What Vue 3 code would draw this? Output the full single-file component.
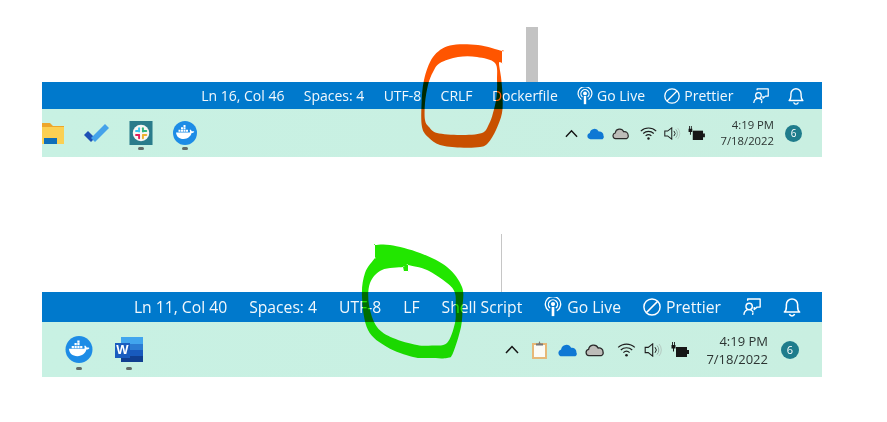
<template>
  <div class="page">
    <svg width="0" height="0" class="defs">
      <symbol id="i-folder" viewBox="0 0 22 21">
        <path d="M0 0h8l3 3h11v5H0z" fill="#eda62b" />
        <path d="M0 4h22v17H0z" fill="#fbd053" />
        <path d="M2 15h13v6H2z" fill="#0f6fb9" />
      </symbol>
      <symbol id="i-todo" viewBox="0 0 25 20">
        <path d="M2 10l7 7" stroke="#1d50b5" stroke-width="5.600" fill="none" />
        <path d="M9 17L23 3" stroke="#45a2ea" stroke-width="5.600" fill="none" />
      </symbol>
      <symbol id="i-slack" viewBox="0 0 24 25">
        <path d="M0 0h24v25H0z" fill="#2a7c8b" />
        <circle cx="12" cy="12.500" r="8.600" fill="#f7f7f4" />
        <g stroke-width="2" stroke-linecap="round">
          <path d="M10 7.500v3.500" stroke="#36c5f0" />
          <path d="M6.800 10.500h3" stroke="#36c5f0" />
          <path d="M14 7.500v3.500" stroke="#2eb67d" />
          <path d="M14.500 10.500h3" stroke="#2eb67d" />
          <path d="M14 14.500v3.500" stroke="#ecb22e" />
          <path d="M14.500 14.500h3" stroke="#ecb22e" />
          <path d="M10 14.500v3.500" stroke="#e01e5a" />
          <path d="M6.800 14.500h3" stroke="#e01e5a" />
        </g>
      </symbol>
      <symbol id="i-docker" viewBox="0 0 24 24">
        <circle cx="12" cy="12" r="12" fill="#1d8ce6" />
        <path d="M3 11.400h13.800c.4-1 .2-1.800-.2-2.500l.8-.5c.8.600 1.300 1.200 1.400 1.900.9-.2 1.800-.1 2.500.3-.5 1-1.500 1.500-2.700 1.500-1 3.500-3.800 5.800-8 5.800-4.600 0-7-2.200-7.600-6.500z" fill="#fff" />
        <path d="M5.500 8.800h2v2h-2zM8 8.800h2v2H8zM10.500 8.800h2v2h-2zM8 6.300h2v2H8zM10.500 6.300h2v2h-2zM10.500 3.900h2v2h-2zM13 8.800h2v2h-2z" fill="#fff" />
      </symbol>
      <symbol id="i-word" viewBox="0 0 28 25">
        <path d="M6 0h22v7H6z" fill="#41a5ee" />
        <path d="M6 7h22v6H6z" fill="#2b7cd3" />
        <path d="M6 13h22v6H6z" fill="#185abd" />
        <path d="M6 19h22v6H6z" fill="#103f91" />
        <path d="M0 6h15v15H0z" fill="#1a5cbf" />
      </symbol>
      <symbol id="i-live" viewBox="0 0 16 18">
        <g fill="none" stroke="#fff" stroke-width="1.200" stroke-linecap="round">
          <path d="M4.100 12.200A6.900 6.900 0 1 1 11.900 12.200" />
          <path d="M5.100 9.600A4.100 4.100 0 1 1 10.900 9.600" />
        </g>
        <circle cx="8" cy="6.400" r="1.900" fill="#fff" />
        <path d="M6.800 9h2.400v8.200H6.800z" fill="#fff" />
      </symbol>
      <symbol id="i-prettier" viewBox="0 0 16 16">
        <g fill="none" stroke="#fff" stroke-width="1.300">
          <circle cx="8" cy="8" r="7.200" />
          <path d="M3 13L13 3" />
        </g>
      </symbol>
      <symbol id="i-feedback" viewBox="0 0 17 17">
        <g fill="none" stroke="#fff" stroke-width="1.300" stroke-linejoin="round">
          <path d="M4.400 2.500V1h11.800v7.600h-3l-2.600 2.200V8.600" />
          <circle cx="5.800" cy="8" r="3" />
          <path d="M.8 16c.3-3 2.400-5 5-5 1.500 0 3 .8 3.800 2.200" />
          <path d="M9 16l.5-2.500" />
        </g>
      </symbol>
      <symbol id="i-bell" viewBox="0 0 15 17">
        <g fill="none" stroke="#fff" stroke-width="1.300" stroke-linejoin="round">
          <path d="M1 12.800c1.400-1 1.700-2.400 1.700-4.600V6.500a4.800 4.800 0 0 1 9.600 0v1.700c0 2.200.3 3.600 1.700 4.600z" />
          <path d="M5.300 14.500a2.300 2.300 0 0 0 4.400 0" />
        </g>
      </symbol>
      <symbol id="i-caret" viewBox="0 0 14 9">
        <path d="M1 8l6-6.500L13 8" fill="none" stroke="#141414" stroke-width="1.500" />
      </symbol>
      <symbol id="i-clip" viewBox="0 0 15 18">
        <path d="M1 3h13v14H1z" fill="#fbfbf6" stroke="#e6b877" stroke-width="2" />
        <path d="M4 4.500V2.500h2.500l1-2.500 1 2.500H11v2z" fill="#777" />
      </symbol>
      <symbol id="i-onedrive" viewBox="0 0 19 13">
        <path d="M3.800 12.800a3.500 3.500 0 0 1-.7-6.900 5.300 5.300 0 0 1 10-1.600 4.400 4.400 0 0 1 5.300 4.600 3 3 0 0 1-1 3.900z" fill="#0f78d4" />
      </symbol>
      <symbol id="i-cloud" viewBox="0 0 19 13">
        <path d="M4 12.200a3.200 3.200 0 0 1-.4-6.300 5 5 0 0 1 9.500-1.400 3.900 3.900 0 0 1 4.900 4 2.900 2.900 0 0 1-1.800 3.700z" fill="#bdbdb9" stroke="#2a2a2a" stroke-width="1.300" />
      </symbol>
      <symbol id="i-wifi" viewBox="0 0 18 14">
        <g fill="none" stroke="#1e1e1e" stroke-width="1.200">
          <path d="M.7 4.400a12 12 0 0 1 16.600 0" />
          <path d="M3.300 7a8.300 8.300 0 0 1 11.400 0" />
          <path d="M5.900 9.600a4.600 4.600 0 0 1 6.200 0" />
        </g>
        <circle cx="9" cy="12.300" r="1.300" fill="#1e1e1e" />
      </symbol>
      <symbol id="i-speaker" viewBox="0 0 18 14">
        <path d="M.7 4.400h3L8.200.9v12.200L3.700 9.600h-3z" fill="none" stroke="#1e1e1e" stroke-width="1.100" />
        <path d="M10.500 4.200a4 4 0 0 1 0 5.600" fill="none" stroke="#1e1e1e" stroke-width="1" />
        <path d="M12.500 2.500a6.600 6.600 0 0 1 0 9" fill="none" stroke="#8fa59d" stroke-width="1" />
        <path d="M14.500 1a9 9 0 0 1 0 12" fill="none" stroke="#b5c9c1" stroke-width="1" />
      </symbol>
      <symbol id="i-power" viewBox="0 0 18 15">
        <path d="M5 5h11v10H5z" fill="#161616" />
        <path d="M16 8h2v4h-2z" fill="#161616" />
        <path d="M.5 3h4v3.500h-4zM1 0h.9v3H1zM3 0h.9v3H3zM2 6.500h1v3H2z" fill="#161616" />
      </symbol>
    </svg>

    <div class="edge wide"></div>
    <section v-for="bar in bars" :key="bar.id" class="panel" :class="bar.id">
      <div v-if="bar.id === 'lower'" class="edge thin"></div>
      <div class="status">
        <span v-for="item in bar.items" :key="item.text || item.icon" class="item">
          <svg v-if="item.icon" class="status-icon"><use :href="'#i-' + item.icon" /></svg>
          <span v-if="item.text">{{ item.text }}</span>
        </span>
      </div>
      <div class="taskbar">
        <div class="apps">
          <span v-for="app in bar.apps" :key="app.icon" class="app" :class="app.icon">
            <svg><use :href="'#i-' + app.icon" /></svg>
            <b v-if="app.icon === 'word'" class="word-w">W</b>
            <i v-if="app.open" class="pip"></i>
          </span>
        </div>
        <div class="tray">
          <svg v-for="icon in bar.tray" :key="icon" class="tray-icon" :class="icon"><use :href="'#i-' + icon" /></svg>
          <div class="clock">
            <span>4:19 PM</span>
            <span>7/18/2022</span>
          </div>
          <span class="badge">6</span>
        </div>
      </div>
    </section>

    <svg class="ink" viewBox="0 0 887 422" width="887" height="422">
      <path fill="#ff5500" fill-rule="evenodd" :d="orangeMark" />
      <path fill="#22e600" fill-rule="evenodd" :d="greenMark" />
    </svg>
  </div>
</template>

<script setup>
const bars = [
  {
    id: 'upper',
    items: [
      { text: 'Ln 16, Col 46' },
      { text: 'Spaces: 4' },
      { text: 'UTF-8' },
      { text: 'CRLF' },
      { text: 'Dockerfile' },
      { icon: 'live', text: 'Go Live' },
      { icon: 'prettier', text: 'Prettier' },
      { icon: 'feedback' },
      { icon: 'bell' }
    ],
    apps: [
      { icon: 'folder' },
      { icon: 'todo' },
      { icon: 'slack', open: true },
      { icon: 'docker', open: true }
    ],
    tray: ['caret', 'onedrive', 'cloud', 'wifi', 'speaker', 'power']
  },
  {
    id: 'lower',
    items: [
      { text: 'Ln 11, Col 40' },
      { text: 'Spaces: 4' },
      { text: 'UTF-8' },
      { text: 'LF' },
      { text: 'Shell Script' },
      { icon: 'live', text: 'Go Live' },
      { icon: 'prettier', text: 'Prettier' },
      { icon: 'feedback' },
      { icon: 'bell' }
    ],
    apps: [
      { icon: 'docker', open: true },
      { icon: 'word', open: true }
    ],
    tray: ['caret', 'clip', 'onedrive', 'cloud', 'wifi', 'speaker', 'power']
  }
]

// closed catmull-rom through hand-picked points, repeat a point for a hard corner
function smooth(points) {
  const n = points.length
  let d = `M${points[0][0]} ${points[0][1]}`
  for (let i = 0; i < n; i++) {
    const p0 = points[(i - 1 + n) % n]
    const p1 = points[i]
    const p2 = points[(i + 1) % n]
    const p3 = points[(i + 2) % n]
    const c1 = [p1[0] + (p2[0] - p0[0]) / 6, p1[1] + (p2[1] - p0[1]) / 6]
    const c2 = [p2[0] - (p3[0] - p1[0]) / 6, p2[1] - (p3[1] - p1[1]) / 6]
    d += `C${c1[0].toFixed(1)} ${c1[1].toFixed(1)} ${c2[0].toFixed(1)} ${c2[1].toFixed(1)} ${p2[0]} ${p2[1]}`
  }
  return d + 'Z'
}

const orangeMark =
  smooth([
    [502, 51], [502, 51], [502, 63], [502, 63], [499, 63], [501, 77], [502.500, 95], [502, 113], [496, 130], [488, 143],
    [480, 147], [460, 147.500], [440, 145], [428, 137], [422, 127], [421.500, 105], [424, 80], [433, 57], [450, 45.500], [478, 45]
  ]) +
  smooth([
    [495, 63], [497, 80], [496.500, 97], [493, 113], [489, 124], [482, 133], [460, 135], [437, 133], [429, 127], [425, 120],
    [425, 103], [428, 85], [433, 72], [440, 63], [458, 57], [477, 57]
  ])

const greenMark =
  smooth([
    [375, 245], [375, 245], [390, 245], [420, 253], [447, 267], [462, 287], [462.500, 307], [461, 327], [453, 353], [447, 358],
    [430, 358], [413, 357], [387, 347], [368, 330], [362, 297], [365, 273], [375, 258], [375, 258]
  ]) +
  smooth([
    [382, 270], [403, 267], [403, 267], [404, 271], [404, 271], [408, 271], [408, 271], [408, 265], [408, 265], [427, 270],
    [447, 283], [455, 293], [455.500, 308], [455, 323], [447, 343], [432, 345.500], [417, 345], [393, 338], [377, 327], [369, 305], [370, 283]
  ])
</script>

<style>
html,
body {
  margin: 0;
  background: #fff;
}
</style>

<style scoped>
.page {
  position: relative;
  width: 887px;
  height: 422px;
  overflow: hidden;
  background: #fff;
  padding: 27px 0 0 42px;
  box-sizing: border-box;
  font-family: "Open Sans", "Noto Sans", sans-serif;
}

.defs {
  position: absolute;
}

.edge.wide {
  width: 12px;
  height: 55px;
  margin-left: 484px;
  background: #c3c3c3;
}

.edge.thin {
  width: 1px;
  height: 58px;
  margin-left: 459px;
  background: #c6c6c6;
}

.panel {
  width: 780px;
}

.panel.lower {
  margin-top: 77px;
}

.status {
  display: flex;
  justify-content: flex-end;
  align-items: center;
  background: #0079cc;
  color: #f2f8fc;
  white-space: nowrap;
}

.item {
  display: flex;
  align-items: center;
}

.status-icon {
  display: block;
}

.taskbar {
  display: flex;
  justify-content: space-between;
  align-items: center;
  background: linear-gradient(90deg, #c8f1e3, #c9efe1);
}

.apps,
.tray {
  display: flex;
  align-items: center;
}

.app {
  position: relative;
  display: block;
}

.app svg {
  display: block;
  width: 100%;
  height: 100%;
}

.word-w {
  position: absolute;
  left: 0;
  top: 6px;
  width: 15px;
  font: 700 13px/16px "Liberation Sans", sans-serif;
  text-align: center;
  color: #fff;
}

.pip {
  position: absolute;
  left: 50%;
  width: 6px;
  height: 3px;
  margin-left: -3px;
  border-radius: 2px;
  background: #626b68;
}

.clock {
  display: flex;
  flex-direction: column;
  align-items: flex-end;
  color: #2c3432;
}

.badge {
  display: flex;
  align-items: center;
  justify-content: center;
  border-radius: 50%;
  background: #1f7c8c;
  color: #fff;
}

.upper .status {
  height: 27px;
  gap: 19.300px;
  padding-right: 18px;
  font-size: 14px;
}

.upper .status-icon {
  width: 16px;
  height: 18px;
}

.upper .status-icon:not(:last-child) {
  margin-right: 4px;
}

.upper .taskbar {
  height: 48px;
}

.upper .app {
  width: 24px;
  height: 24px;
  margin-right: 20px;
}

.upper .app.folder {
  width: 22px;
  height: 21px;
}

.upper .app.todo {
  width: 25px;
  height: 20px;
}

.upper .app .pip {
  bottom: -5px;
}

.upper .tray {
  padding-right: 20px;
}

.upper .tray-icon {
  width: 17px;
  height: 13px;
  margin-right: 7px;
}

.upper .tray-icon.caret {
  width: 13px;
  height: 9px;
  margin-right: 9px;
}

.upper .tray-icon.onedrive {
  margin-right: 8px;
}

.upper .tray-icon.cloud {
  margin-right: 11px;
}

.upper .tray-icon.power {
  width: 17px;
  height: 14px;
}

.upper .clock {
  font-size: 11.300px;
  line-height: 16px;
  margin-left: 8px;
}

.upper .badge {
  width: 17px;
  height: 17px;
  margin-left: 11px;
  font-size: 10px;
}

.lower .status {
  height: 30px;
  gap: 22px;
  padding-right: 21px;
  font-size: 15.700px;
}

.lower .status-icon {
  width: 18px;
  height: 20px;
}

.lower .status-icon:not(:last-child) {
  margin-right: 5px;
}

.lower .taskbar {
  height: 55px;
  padding-left: 23px;
}

.lower .app {
  width: 28px;
  height: 27px;
  margin-right: 22px;
}

.lower .app .pip {
  bottom: -7px;
}

.lower .tray {
  padding-right: 23px;
}

.lower .tray-icon {
  width: 19px;
  height: 14px;
  margin-right: 8px;
}

.lower .tray-icon.caret {
  width: 14px;
  height: 9px;
  margin-right: 13px;
}

.lower .tray-icon.clip {
  width: 15px;
  height: 18px;
  margin-right: 11px;
}

.lower .tray-icon.cloud {
  margin-right: 13px;
}

.lower .tray-icon.power {
  width: 18px;
  height: 15px;
}

.lower .clock {
  font-size: 13px;
  line-height: 18px;
  margin-left: 9px;
}

.lower .badge {
  width: 18px;
  height: 18px;
  margin-left: 13px;
  font-size: 11px;
}

.ink {
  position: absolute;
  left: 0;
  top: 0;
  mix-blend-mode: multiply;
  pointer-events: none;
}
</style>
